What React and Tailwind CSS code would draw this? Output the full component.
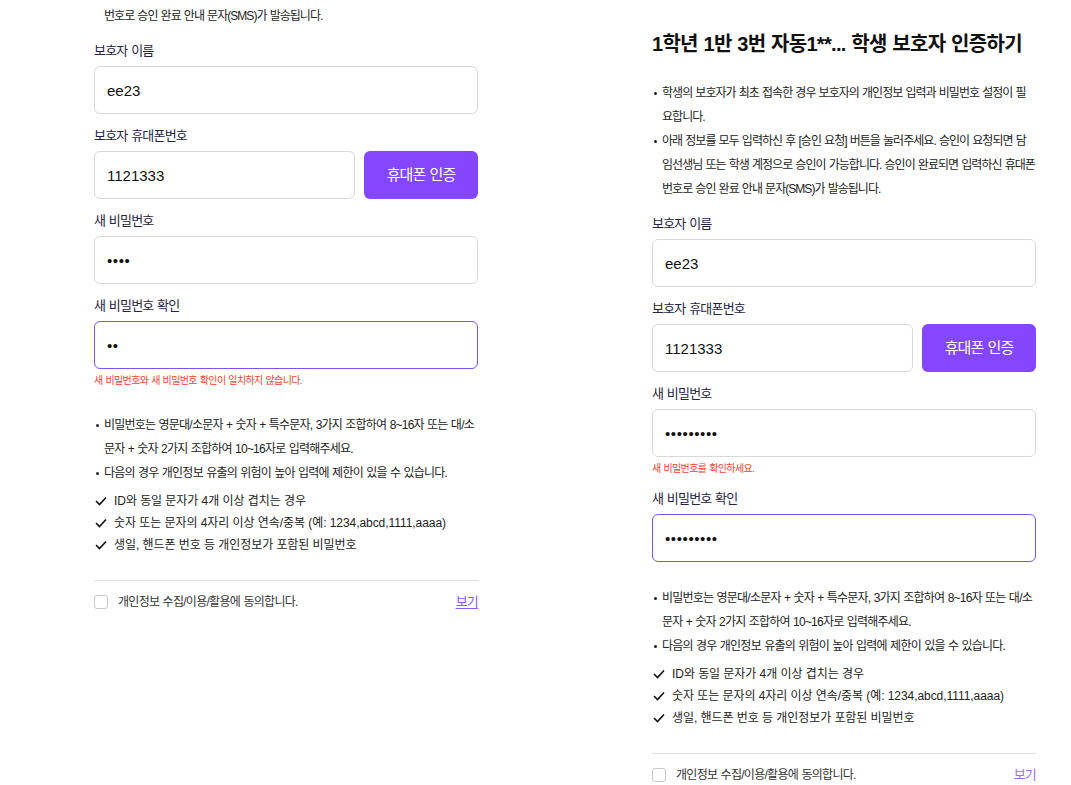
import React from 'react'

const KO = "[font-family:'Liberation_Sans','Noto_Sans_CJK_KR',sans-serif]"
const TIGHT = 'tracking-[-0.06em] [word-spacing:0.06em]'

// notice copy, kept with the same line breaks as the published page
const intro = [
  ['학생의 보호자가 최초 접속한 경우 보호자의 개인정보 입력과 비밀번호 설정이 필', '요합니다.'],
  [
    '아래 정보를 모두 입력하신 후 [승인 요청] 버튼을 눌러주세요. 승인이 요청되면 담',
    '임선생님 또는 학생 계정으로 승인이 가능합니다. 승인이 완료되면 입력하신 휴대폰',
    '번호로 승인 완료 안내 문자(SMS)가 발송됩니다.',
  ],
]

const pwRules = [
  ['비밀번호는 영문대/소문자 + 숫자 + 특수문자, 3가지 조합하여 8~16자 또는 대/소', '문자 + 숫자 2가지 조합하여 10~16자로 입력해주세요.'],
  ['다음의 경우 개인정보 유출의 위험이 높아 입력에 제한이 있을 수 있습니다.'],
]

const pwChecks = [
  'ID와 동일 문자가 4개 이상 겹치는 경우',
  '숫자 또는 문자의 4자리 이상 연속/중복 (예: 1234,abcd,1111,aaaa)',
  '생일, 핸드폰 번호 등 개인정보가 포함된 비밀번호',
]

function Bullets({ items, tight = 'tracking-[-0.08em]' }) {
  return (
    <ul className={`text-[12px] leading-6 text-[#222] ${tight} [word-spacing:0.06em]`}>
      {items.map((lines, i) => (
        <li key={i} className="flex">
          <span className="w-[10px] h-6 shrink-0 flex items-center">
            <span className="w-[3px] h-[3px] ml-[2px] bg-[#222] rounded-full" />
          </span>
          <div className="min-w-0">
            {lines.map((l, j) => (
              <div key={j} className="whitespace-nowrap">{l}</div>
            ))}
          </div>
        </li>
      ))}
    </ul>
  )
}

function Field({ label, error, children }) {
  return (
    <div>
      <div className={`text-[13px] leading-5 text-[#25233f] mb-[5px] ${TIGHT}`}>{label}</div>
      {children}
      {error && <p className={`mt-1 text-[10px] leading-4 text-[#f2412f] ${TIGHT}`}>{error}</p>}
    </div>
  )
}

function TextBox({ value, type = 'text', focused }) {
  return (
    <input
      type={type}
      value={value}
      readOnly
      className={`w-full h-12 px-3 rounded-md border bg-white text-[15px] text-[#111] outline-none ${
        type === 'password' ? 'tracking-[0.04em]' : ''
      } ${focused ? 'border-[#7c52f0]' : 'border-[#d9d9d9]'}`}
    />
  )
}

function GuardianForm({ pw, pwConfirm, pwError, confirmError, linkHover }) {
  return (
    <div>
      <h1 className="text-[20px] leading-7 font-bold text-[#111] tracking-[-0.035em] [word-spacing:0.04em]">
        1학년 1반 3번 자동1**... 학생 보호자 인증하기
      </h1>

      <div className="mt-[23px]">
        <Bullets items={intro} />
      </div>

      <div className="mt-[13px] flex flex-col gap-3">
        <Field label="보호자 이름">
          <TextBox value="ee23" />
        </Field>
        <Field label="보호자 휴대폰번호">
          <div className="flex gap-[9px]">
            <TextBox value="1121333" />
            <button className={`w-[114px] h-12 shrink-0 rounded-md bg-[#8447ff] text-white text-[15px] ${TIGHT}`}>
              휴대폰 인증
            </button>
          </div>
        </Field>
        <Field label="새 비밀번호" error={pwError}>
          <TextBox type="password" value={pw} />
        </Field>
        <Field label="새 비밀번호 확인" error={confirmError}>
          <TextBox type="password" value={pwConfirm} focused />
        </Field>
      </div>

      <div className="mt-6">
        <Bullets items={pwRules} tight="tracking-[-0.065em]" />
        <ul className="mt-[5px] text-[12px] leading-[22px] text-[#222] tracking-[-0.005em]">
          {pwChecks.map((t, i) => (
            <li key={i} className="flex items-center">
              <span className="w-5 shrink-0">
                <svg width="12" height="10" viewBox="0 0 12 10" className="ml-[1px]">
                  <polyline points="1,5 4.5,8.5 11,1.5" fill="none" stroke="#111" strokeWidth="1.6" />
                </svg>
              </span>
              <span>{t}</span>
            </li>
          ))}
        </ul>
      </div>

      <div className="mt-6 border-t border-[#dedede] pt-[11px] flex items-center justify-between leading-5">
        <label className="flex items-center">
          <span className="w-[14px] h-[14px] rounded-[3px] border border-[#c9c9c9] bg-white" />
          <span className={`ml-[10px] text-[12px] text-[#333] ${TIGHT}`}>
            개인정보 수집/이용/활용에 동의합니다.
          </span>
        </label>
        <a
          href="#"
          className={`text-[13px] ${TIGHT} ${
            linkHover ? 'text-[#8a5cff] underline underline-offset-2' : 'text-[#9b6cff]'
          }`}
        >
          보기
        </a>
      </div>
    </div>
  )
}

export default function App() {
  return (
    <div className={`${KO} bg-white h-[785px] w-full overflow-hidden flex`}>
      {/* scrolled sheet */}
      <div className="w-[384px] ml-[94px] shrink-0">
        <div className="-mt-[143px]">
          <GuardianForm pw="1234" pwConfirm="12" confirmError="새 비밀번호와 새 비밀번호 확인이 일치하지 않습니다." linkHover />
        </div>
      </div>

      <div className="w-[384px] ml-[174px] shrink-0 pt-[30px]">
        <GuardianForm pw="123456789" pwConfirm="123456789" pwError="새 비밀번호를 확인하세요." />
      </div>
    </div>
  )
}
